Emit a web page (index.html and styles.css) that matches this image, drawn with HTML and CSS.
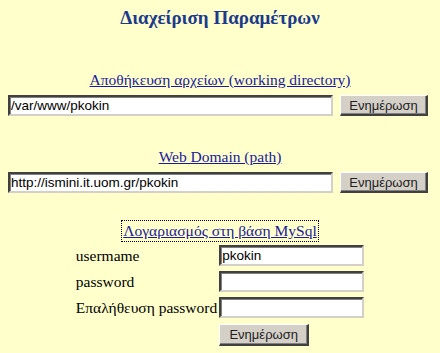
FILE: index.html
```html
<!DOCTYPE html>
<html>
<head>
<meta charset="utf-8">
<link rel="stylesheet" href="styles.css">
</head>
<body>
<div class="page">
  <h1 class="title">Διαχείριση Παραμέτρων</h1>

  <section class="block block-first">
    <a class="section-link" href="#">Αποθήκευση αρχείων (working directory)</a>
    <div class="field-row">
      <input class="text-input wide" type="text" value="/var/www/pkokin">
      <button class="btn">Ενημέρωση</button>
    </div>
  </section>

  <section class="block">
    <a class="section-link" href="#">Web Domain (path)</a>
    <div class="field-row">
      <input class="text-input wide" type="text" value="http://ismini.it.uom.gr/pkokin">
      <button class="btn">Ενημέρωση</button>
    </div>
  </section>

  <section class="block block-db">
    <a class="section-link focused" href="#">Λογαριασμός στη βάση MySql</a>
    <div class="db-grid">
      <span class="label">usermame</span>
      <input class="text-input narrow" type="text" value="pkokin">
      <span class="label">password</span>
      <input class="text-input narrow" type="password" value="">
      <span class="label">Επαλήθευση password</span>
      <input class="text-input narrow" type="password" value="">
      <span></span>
      <button class="btn btn-db">Ενημέρωση</button>
    </div>
  </section>
</div>
</body>
</html>
```

FILE: styles.css
```css
html, body {
  margin: 0;
  padding: 0;
  background: #ffffcc;
}
body {
  font-family: "Liberation Serif", "Times New Roman", serif;
  font-size: 15.5px;
  color: #000;
}
.page {
  display: flex;
  flex-direction: column;
  align-items: center;
  padding: 0 8px;
}
.title {
  margin: 7px 0 0 0;
  font-size: 19px;
  font-weight: bold;
  color: #1c3a8c;
  line-height: 22px;
}
.block {
  display: flex;
  flex-direction: column;
  align-items: center;
  width: 100%;
}
.block-first {
  margin-top: 42px;
}
.block + .block {
  margin-top: 32px;
}
.block.block-db {
  margin-top: 29px;
}
.section-link {
  color: #1a1a9c;
  text-decoration: underline;
  line-height: 18px;
  font-size: 15.5px;
}
.focused {
  outline: 1px dotted #000;
  outline-offset: 1px;
}
.field-row {
  display: flex;
  width: 100%;
  align-items: center;
  margin-top: 6px;
}
.text-input {
  box-sizing: border-box;
  height: 21px;
  border-style: solid;
  border-width: 2px;
  border-color: #404040 #d4d0c8 #d4d0c8 #404040;
  box-shadow: inset 1px 1px 0 #808080;
  background: #fff;
  font-family: "Liberation Sans", Arial, sans-serif;
  font-size: 13.5px;
  padding: 0 1px;
  margin: 0;
  color: #000;
  outline: none;
}
.wide {
  width: 325px;
}
.btn {
  box-sizing: border-box;
  height: 21px;
  width: 88px;
  margin-left: 7px;
  background: #d4d0c8;
  border-style: solid;
  border-width: 1px 2px 2px 1px;
  border-color: #ffffff #404040 #404040 #ffffff;
  box-shadow: inset -1px -1px 0 #808080;
  font-family: "Liberation Sans", Arial, sans-serif;
  font-size: 13px;
  color: #222;
  padding: 0;
}
.db-grid {
  display: grid;
  grid-template-columns: auto 145px;
  column-gap: 2px;
  row-gap: 5px;
  align-items: center;
  margin-top: 5px;
}
.label {
  font-size: 15.5px;
  line-height: 21px;
}
.narrow {
  width: 145px;
  height: 21px;
}
.btn-db {
  margin-left: 0;
  margin-top: 1px;
  width: 90px;
  height: 22px;
}
```
